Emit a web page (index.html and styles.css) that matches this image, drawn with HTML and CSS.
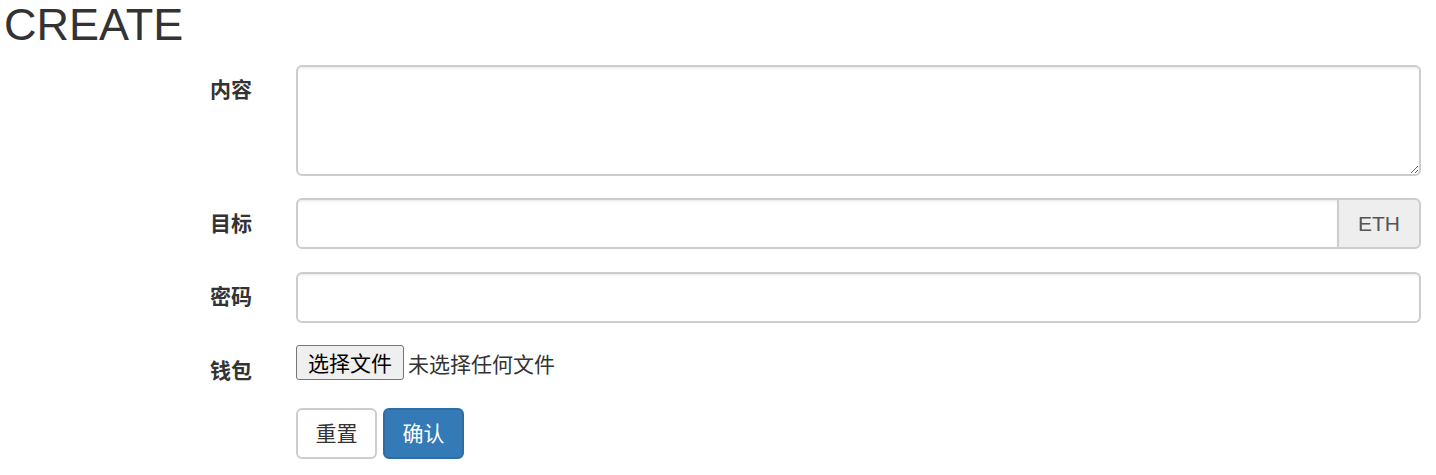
FILE: index.html
```html
<!DOCTYPE html>
<html lang="zh-CN">
<head>
<meta charset="utf-8">
<title>CREATE</title>
<link rel="stylesheet" href="styles.css">
</head>
<body>
<h2 class="title">CREATE</h2>
<form class="form">
  <div class="group">
    <label class="lbl">内容</label>
    <div class="ctl"><textarea class="input area" rows="3"></textarea></div>
  </div>
  <div class="group">
    <label class="lbl">目标</label>
    <div class="ctl">
      <div class="input-group">
        <input class="input joined" type="text">
        <span class="addon">ETH</span>
      </div>
    </div>
  </div>
  <div class="group">
    <label class="lbl">密码</label>
    <div class="ctl"><input class="input" type="password"></div>
  </div>
  <div class="group">
    <label class="lbl">钱包</label>
    <div class="ctl file-row">
      <button type="button" class="file-btn">选择文件</button>
      <span class="file-name">未选择任何文件</span>
    </div>
  </div>
  <div class="group">
    <span class="lbl"></span>
    <div class="ctl actions">
      <button type="reset" class="btn btn-default">重置</button>
      <button type="submit" class="btn btn-primary">确认</button>
    </div>
  </div>
</form>
</body>
</html>
```
FILE: styles.css
```css
* { box-sizing: border-box; }
html, body { margin: 0; padding: 0; background: #fff; }
body {
  font-family: "Liberation Sans", "Noto Sans CJK SC", sans-serif;
  font-size: 21px;
  line-height: 30px;
  color: #333;
}
.title {
  margin: 0 0 15px 0;
  padding-left: 4px;
  font-size: 45px;
  line-height: 1.1;
  font-weight: 500;
  color: #333;
}
.form { padding: 0 15px 0 40px; }
.group { display: flex; align-items: flex-start; margin-bottom: 22.5px; }
.lbl {
  width: 212px;
  flex: none;
  margin-right: 44px;
  padding-top: 10.5px;
  text-align: right;
  font-weight: 700;
  line-height: 30px;
}
.ctl { flex: 1; min-width: 0; }
.input {
  display: block;
  width: 100%;
  height: 51px;
  padding: 9px 18px;
  font: inherit;
  color: #555;
  background: #fff;
  border: 2px solid #cdcdcd;
  border-radius: 6px;
  box-shadow: inset 0 1.5px 1.5px rgba(0,0,0,.075);
  outline: none;
}
.area { height: 111px; resize: vertical; }
.input-group { display: flex; }
.joined { flex: 1; border-top-right-radius: 0; border-bottom-right-radius: 0; }
.addon {
  flex: none;
  height: 51px;
  padding: 9px 19px;
  color: #555;
  background: #eee;
  border: 2px solid #cdcdcd;
  border-left: 0;
  border-radius: 0 6px 6px 0;
  line-height: 30px;
}
.file-row { display: flex; align-items: center; height: 35px; }
.file-btn {
  height: 35px;
  width: 108px;
  padding: 0;
  font: inherit;
  font-family: "Noto Sans CJK SC", sans-serif;
  color: #000;
  background: #efefef;
  border: 1px solid #767676;
  border-radius: 3px;
  line-height: 31px;
}
.file-name { margin-left: 4px; color: #333; font-family: "Noto Sans CJK SC", sans-serif; }
.actions { display: flex; gap: 6px; }
.btn {
  height: 51px;
  width: 81px;
  padding: 9px 0;
  font: inherit;
  line-height: 30px;
  text-align: center;
  border: 2px solid;
  border-radius: 6px;
  cursor: pointer;
}
.btn-default { background: #fff; color: #333; border-color: #cdcdcd; }
.btn-primary { background: #337ab7; color: #fff; border-color: #2e6da4; }
```
